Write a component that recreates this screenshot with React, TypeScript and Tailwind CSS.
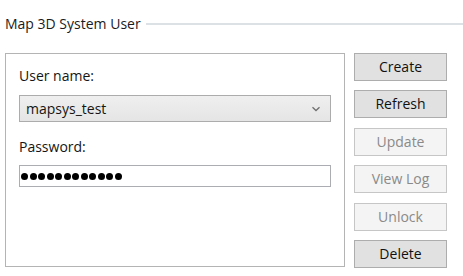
import React from "react";

const font = { fontFamily: '"Open Sans", "Noto Sans", Arial, sans-serif' };

function Btn({ label, disabled }: { label: string; disabled?: boolean }) {
  return (
    <div
      className={
        "h-[28px] w-[93px] flex items-center justify-center border text-[14px] leading-none " +
        (disabled
          ? "bg-[#f4f4f4] border-[#c6c6c6] text-[#8a8a8a]"
          : "bg-[#e1e1e1] border-[#adadad] text-[#111111]")
      }
    >
      {label}
    </div>
  );
}

export default function App() {
  const dots = Array.from({ length: 12 });
  return (
    <div className="w-[463px] h-[276px] bg-white overflow-hidden text-[#151515]" style={font}>
      <div className="pt-[14px] h-[34px] flex items-center pl-[5px]">
        <span className="text-[14px] leading-[20px] whitespace-nowrap text-[#1b1b22]">Map 3D System User</span>
        <div className="ml-[5px] flex-1 h-[2px] bg-[#dce1e5]" />
      </div>
      <div className="mt-[19px] flex pl-[5px] gap-[9px]">
        <div className="w-[340px] h-[214px] border border-[#b4b4b4] px-[13px] pt-[12px] flex flex-col">
          <div className="text-[14px] leading-[20px]">User name:</div>
          <div className="mt-[9px] h-[27px] border border-[#acacac] bg-gradient-to-b from-[#efefef] to-[#e5e5e5] flex items-center pl-[6px] pr-[8px]">
            <span className="text-[14px] leading-none flex-1">mapsys_test</span>
            <svg width="8" height="6" viewBox="0 0 8 6" className="mr-[2px]">
              <path d="M0.5 1.2 L4 4.5 L7.5 1.2" fill="none" stroke="#707070" strokeWidth="1.3" />
            </svg>
          </div>
          <div className="mt-[15px] text-[14px] leading-[20px]">Password:</div>
          <div className="mt-[8px] h-[22px] border border-[#abadb3] bg-white flex items-center pl-[1px] gap-[1.5px]">
            {dots.map((_, i) => (
              <div key={i} className="w-[7px] h-[7px] rounded-full bg-black" />
            ))}
          </div>
        </div>
        <div className="h-[215px] flex flex-col justify-between">
          <Btn label="Create" />
          <Btn label="Refresh" />
          <Btn label="Update" disabled />
          <Btn label="View Log" disabled />
          <Btn label="Unlock" disabled />
          <Btn label="Delete" />
        </div>
      </div>
    </div>
  );
}
